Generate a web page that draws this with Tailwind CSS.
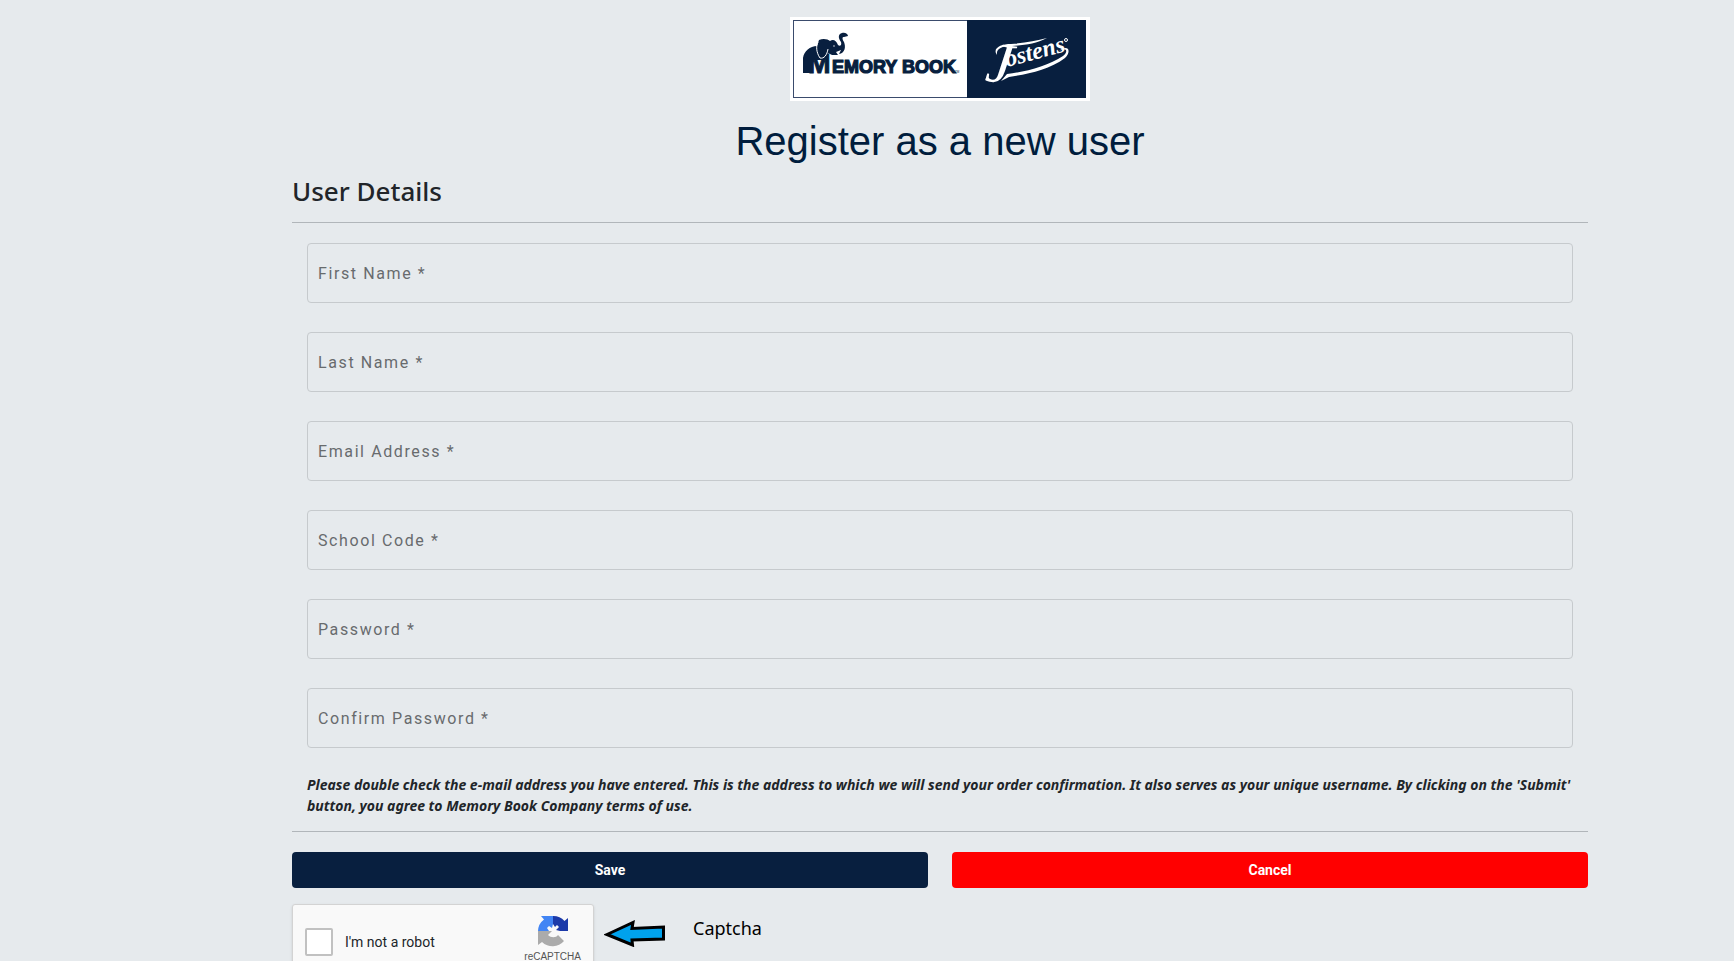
<!DOCTYPE html>
<html lang="en">
<head>
<meta charset="utf-8">
<title>Register as a new user</title>
<script src="https://cdn.jsdelivr.net/npm/@tailwindcss/browser@4"></script>
</head>
<body class="h-screen overflow-hidden bg-[#e6eaed] pl-[146px] text-[#212529] font-['Noto_Sans',sans-serif]">
<main class="mx-auto max-w-[1320px] px-3 pt-[17px]">
  <header class="flex flex-col items-center">
    <svg class="h-[84px] w-[300px]" viewBox="0 0 300 84" role="img" aria-label="Memory Book, Jostens">
      <rect width="300" height="84" fill="#fff"/>
      <rect x="3.500" y="3.500" width="292" height="77" fill="#fff" stroke="#3a4b6c"/>
      <rect x="177" y="3" width="119" height="78" fill="#081f3f"/>
      <g fill="#081f3f">
        <path d="M13 56V41C14 34 20 29 27 29L29 23C33 21 38 22 40 24C43 22 46 23 48 28C50 30 52 28 51 25C48 21 48 17 52 16C55 15 58 17 58 19L54 20C52 20 52 22 54 25C56 30 55 36 49 37L51 33L46 35L48 38H42L38 36L35 43H24L21 45V56Z"/>
        <text x="18" y="56" font-family="Liberation Sans, sans-serif" font-weight="700" font-size="27" stroke="#081f3f">M</text>
        <path d="M28 25C26 29 26 35 30 41C34 42 37 38 38 32" fill="none" stroke="#fff" stroke-width="1"/>
        <circle cx="44" cy="29" r="0.700" fill="#fff"/>
        <text x="42" y="56" font-family="Liberation Sans, sans-serif" font-weight="700" font-size="18" stroke="#081f3f" stroke-width="1.200">EMORY BOOK</text>
        <text x="165" y="56" font-family="Liberation Sans, sans-serif" font-size="3">TM</text>
      </g>
      <g fill="#fff" font-family="Liberation Serif, serif" font-style="italic">
        <text x="197" y="65" font-size="58" transform="rotate(8 207 45)">J</text>
        <text x="217" y="50" font-size="24" font-weight="700" transform="rotate(-15 217 50)">ostens</text>
        <circle cx="276" cy="23" r="1.500" fill="none" stroke="#fff" stroke-width="1"/>
        <path d="M211 64L217 57C235 55 258 49 273 39C279 34 276 30 269 34C278 27 282 34 275 41C259 53 238 57 219 60Z"/>
        <path d="M207 38C202 31 211 27 221 27C235 26 246 24 257 21C246 27 235 28 222 29C211 29 206 32 207 38Z"/>
      </g>
    </svg>
    <h1 class="mt-4 font-['Liberation_Sans',sans-serif] text-[40px] leading-12 text-[#001d3d]">Register as a new user</h1>
  </header>
  <form>
    <h2 class="mt-2 text-[26px] leading-9 font-medium">User Details</h2>
    <hr class="mt-[13px] border-[#b1b6ba]">
    <div class="mt-5 px-[15px] font-[Roboto,sans-serif]">
      <div class="flex flex-col gap-[29px]">
        <input aria-label="First Name" placeholder="First Name *" class="h-[60px] w-full rounded border border-[#c6cacd] px-[10px] tracking-widest placeholder:text-[#686b6d]">
        <input aria-label="Last Name" placeholder="Last Name *" class="h-[60px] w-full rounded border border-[#c6cacd] px-[10px] tracking-widest placeholder:text-[#686b6d]">
        <input type="email" aria-label="Email Address" placeholder="Email Address *" class="h-[60px] w-full rounded border border-[#c6cacd] px-[10px] tracking-widest placeholder:text-[#686b6d]">
        <input aria-label="School Code" placeholder="School Code *" class="h-[60px] w-full rounded border border-[#c6cacd] px-[10px] tracking-widest placeholder:text-[#686b6d]">
        <input type="password" aria-label="Password" placeholder="Password *" class="h-[60px] w-full rounded border border-[#c6cacd] px-[10px] tracking-widest placeholder:text-[#686b6d]">
        <input type="password" aria-label="Confirm Password" placeholder="Confirm Password *" class="h-[60px] w-full rounded border border-[#c6cacd] px-[10px] tracking-widest placeholder:text-[#686b6d]">
      </div>
    </div>
    <p class="mt-[26px] px-[15px] text-sm leading-[21px] font-bold italic">Please double check the e-mail address you have entered. This is the address to which we will send your order confirmation. It also serves as your unique username. By clicking on the 'Submit' button, you agree to Memory Book Company terms of use.</p>
    <hr class="mt-[15px] border-[#b1b6ba]">
    <div class="mt-5 grid grid-cols-2 gap-6 font-[Roboto,sans-serif] text-sm font-bold text-white">
      <button type="submit" class="h-9 rounded bg-[#081f3f]">Save</button>
      <button type="button" class="h-9 rounded bg-[#ff0000]">Cancel</button>
    </div>
    <div class="mt-4 flex items-start">
      <div class="flex h-[76px] w-[302px] shrink-0 items-center rounded-[3px] border border-[#d3d3d3] bg-[#f9f9f9] pl-3 shadow-sm">
        <label class="flex items-center gap-3 font-[Roboto,sans-serif] text-sm">
          <input type="checkbox" class="size-7 appearance-none rounded-[2px] border-2 border-[#c1c1c1] bg-white">I'm not a robot
        </label>
        <div class="mr-3 ml-auto flex flex-col items-center self-start pt-[10px]">
          <svg class="size-8" viewBox="0 0 32 32" aria-hidden="true">
            <path fill="#1c3aa9" d="M31 16V3L27.500 6A15 15 0 0 0 16 1V9L18 12L20 10L22 12L19 15L23 16Z"/>
            <path fill="#4285f4" d="M16 1H4L7 4.500A15 15 0 0 0 1 16H12L10 13L12 11L15 13L16 9Z"/>
            <path fill="#ababab" d="M1 16V30L5 27A15 15 0 0 0 27 26L21 20C19 23 14 23 11 20L15 16Z"/>
          </svg>
          <span class="mt-1 font-['Liberation_Sans',sans-serif] text-[10px] leading-3 text-[#555]">reCAPTCHA</span>
        </div>
      </div>
      <svg class="mt-4 ml-[10px] h-[27px] w-[62px]" viewBox="0 0 62 27" aria-hidden="true"><path d="M3 14.500L29 2.500L28 8.500L59.500 7V19L28 20L28.500 25Z" fill="#00a2ed" stroke="#000" stroke-width="3"/></svg>
      <span class="mt-3 ml-[27px] text-[18px] leading-6 text-black">Captcha</span>
    </div>
  </form>
</main>
</body>
</html>
